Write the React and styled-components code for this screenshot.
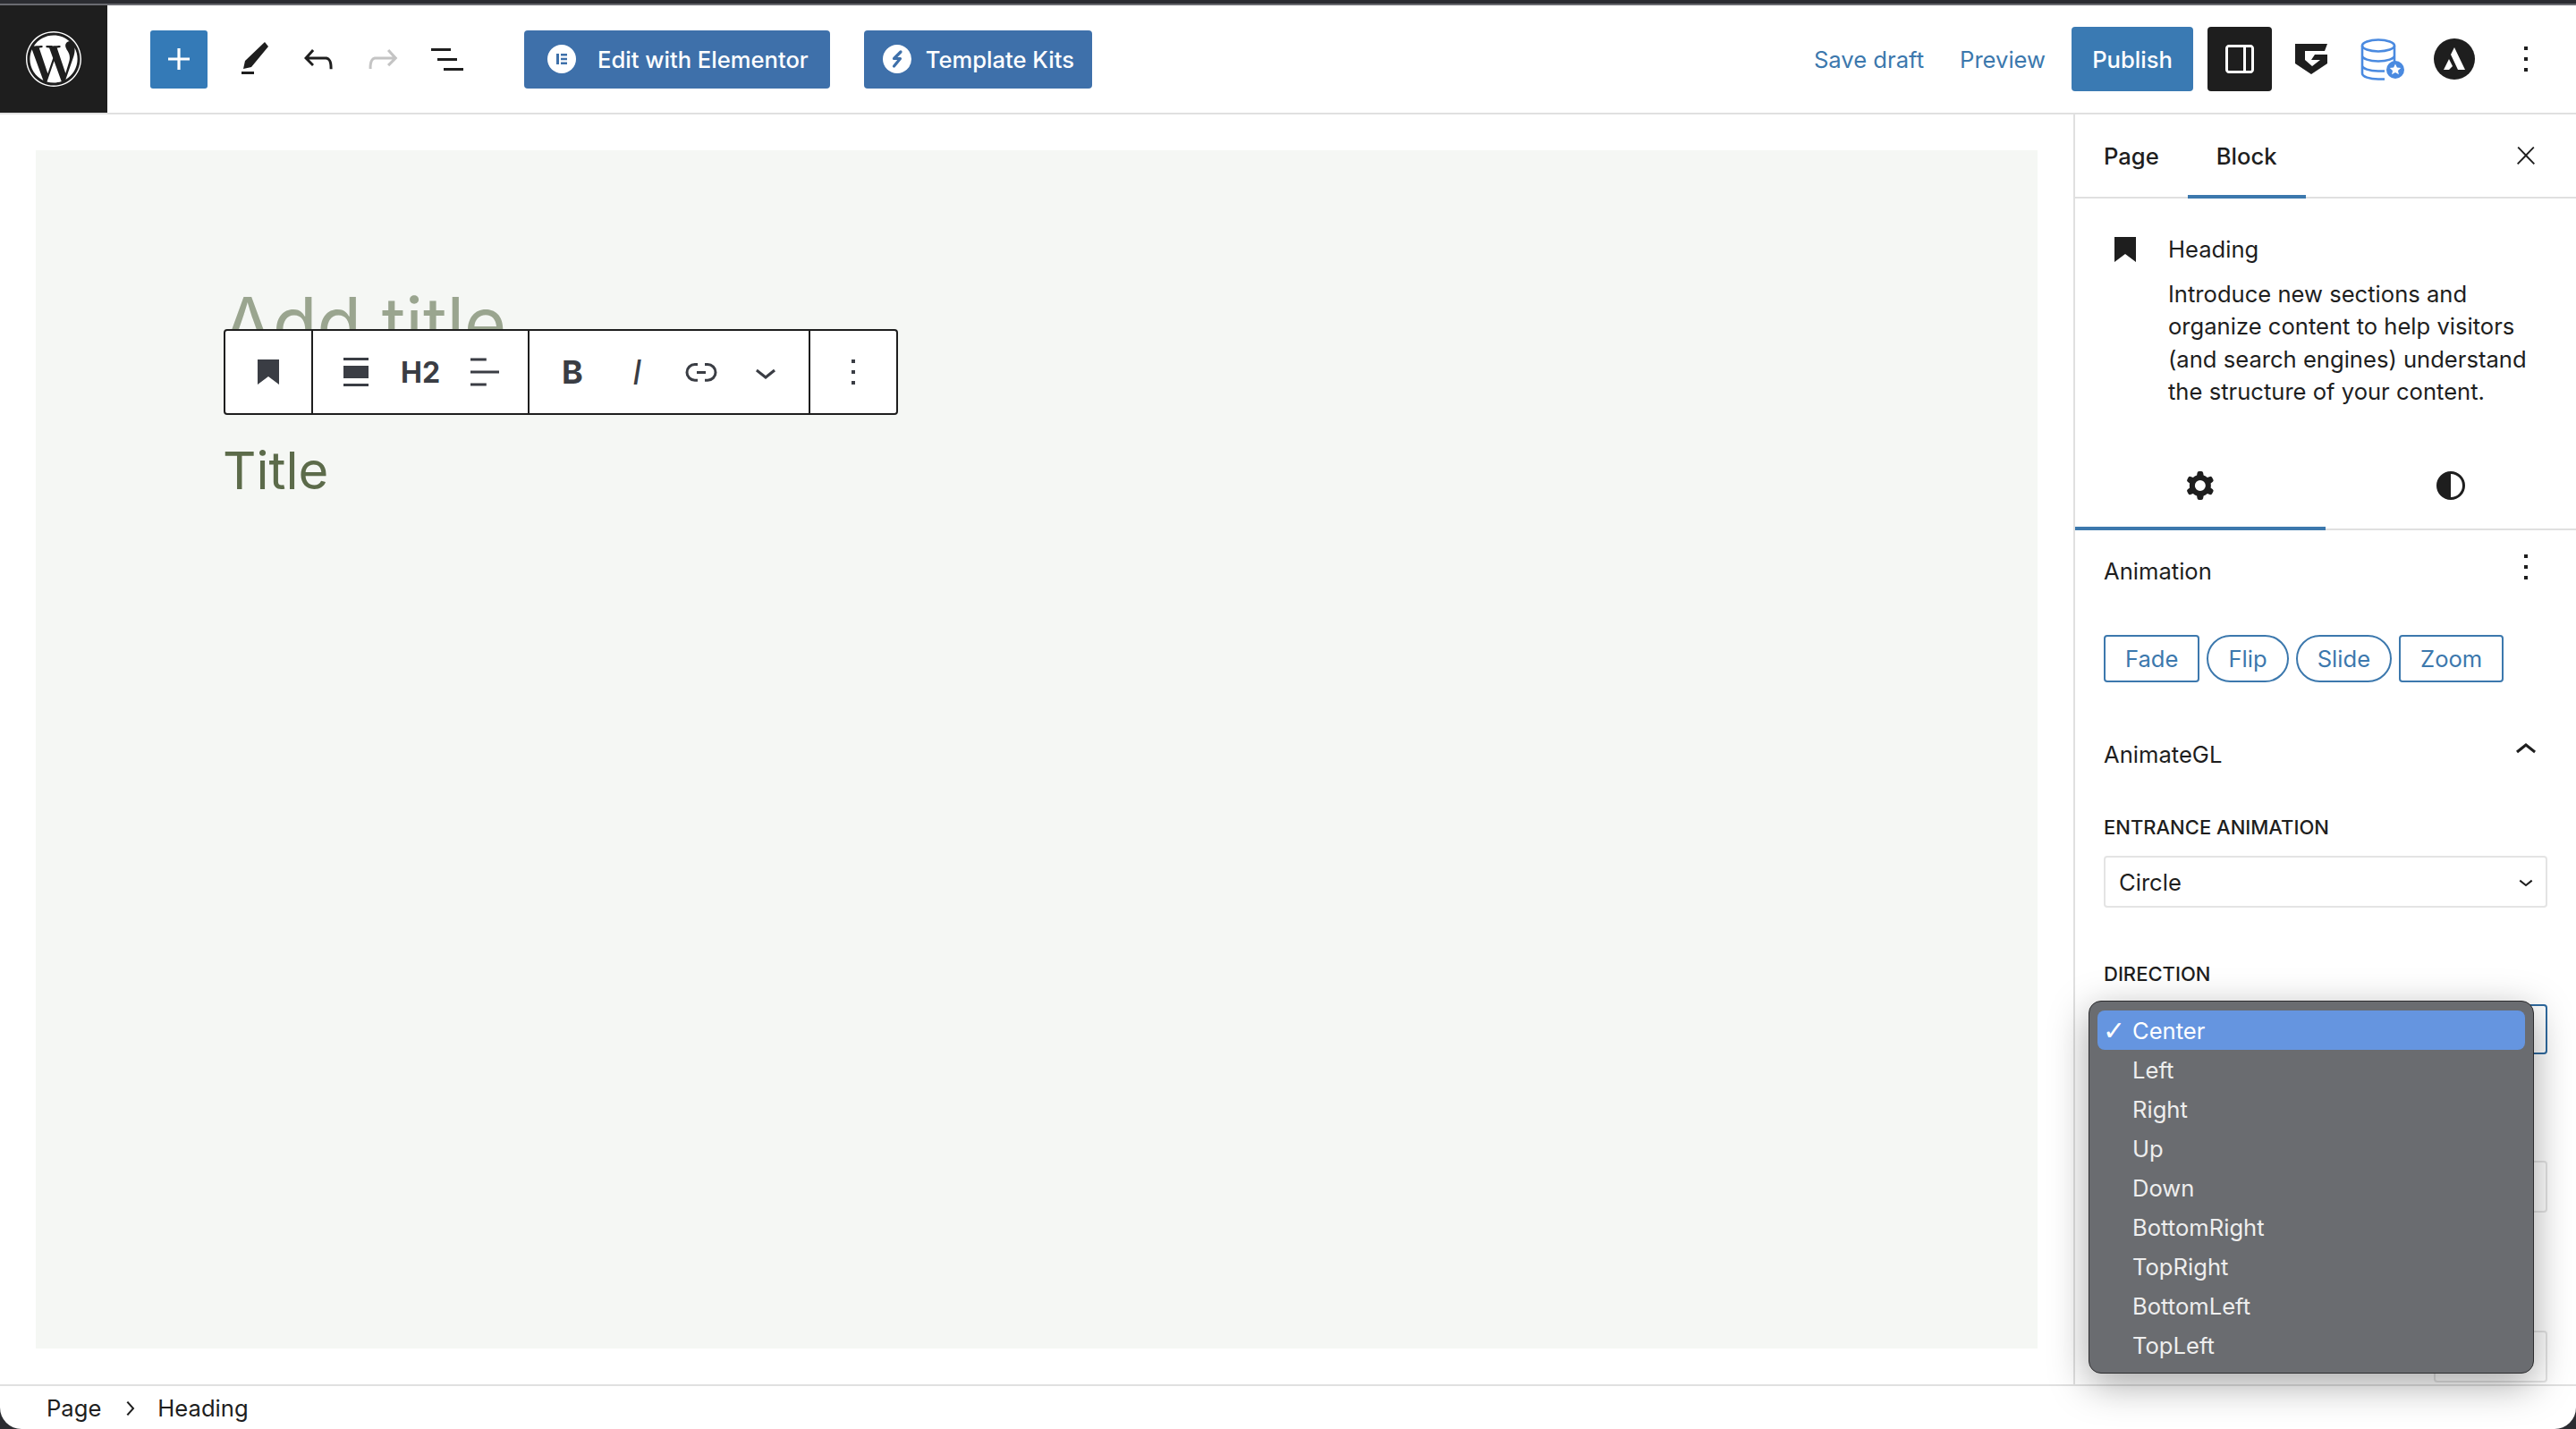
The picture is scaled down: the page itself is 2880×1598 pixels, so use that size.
import React from 'react'
import styled, { createGlobalStyle } from 'styled-components'
import { FaWordpress } from 'react-icons/fa'

const paths = {
    plus: 'M18 11.2h-5.2V6h-1.6v5.2H6v1.6h5.2V18h1.6v-5.2H18z',
    pencil: 'M18 2.500L20 5 10.500 16.500 6 17.500 7 13ZM5 19h7v1.500H5Z',
    undo: 'M18.3 11.7c-.6-.6-1.4-.9-2.3-.9H6.7l2.9-3.3-1.1-1-4.5 5L8.5 16l1-1-2.7-2.7H16c.5 0 .9.2 1.3.5 1 1 1 3.4 1 4.5v.3h1.5v-.2c0-1.5 0-4.3-1.5-5.7z',
    redo: 'M15.6 6.5l-1.1 1 2.9 3.3H8c-.9 0-1.7.3-2.3.9-1.4 1.5-1.4 4.2-1.4 5.6v.2h1.5v-.3c0-1.1 0-3.5 1-4.5.3-.3.7-.5 1.3-.5h9.2L14.5 15l1.1 1.1 4.6-4.6-4.6-5z',
    list: 'M3 6h11v1.5H3V6Zm3.5 5.5h11V13h-11v-1.5ZM21 17H10v1.5h11V17Z',
    drawer: 'M18 4H6c-1.1 0-2 .9-2 2v12c0 1.1.9 2 2 2h12c1.1 0 2-.9 2-2V6c0-1.1-.9-2-2-2zm-4 14.5H6c-.3 0-.5-.2-.5-.5V6c0-.3.2-.5.5-.5h8v13zm4.5-.5c0 .3-.2.5-.5.5h-2.5v-13H18c.3 0 .5.2.5.5v12z',
    more: 'M13 19h-2v-2h2v2zm0-6h-2v-2h2v2zm0-6h-2V5h2v2z',
    close: 'M13 11.8l6.1-6.3-1-1-6.1 6.2-6.1-6.2-1 1 6.1 6.3-6.5 6.7 1 1 6.5-6.6 6.5 6.6 1-1z',
    bookmark: 'M6 5h12v14l-6-4.5L6 19z',
    alignWide: 'M5 4h14v1.5H5zM5 18.5h14V20H5zM5 8.5h14v7H5z',
    textLeft: 'M4 19.8h8.9v-1.5H4v1.5zm8.9-15.6H4v1.5h8.9V4.2zm-8.9 7v1.5h16v-1.5H4z',
    link: 'M10 17.389H8.444A5.194 5.194 0 1 1 8.444 7H10v1.5H8.444a3.694 3.694 0 0 0 0 7.389H10v1.5ZM14 7h1.556a5.194 5.194 0 0 1 0 10.39H14v-1.5h1.556a3.694 3.694 0 0 0 0-7.39H14V7Zm-4.5 6h5v-1.5h-5V13Z',
    chevronDown: 'M17.5 11.6L12 16l-5.5-4.4.9-1.2L12 14l4.5-3.6 1 1.2z',
    chevronUp: 'M6.5 12.4L12 8l5.5 4.4-.9 1.2L12 10l-4.5 3.6-1-1.2z',
    chevronRight: 'M10.6 6L9.4 7l4.6 5-4.6 5 1.2 1 5.4-6z',
    gear: 'M10.289 4.836A1 1 0 0111.275 4h1.306a1 1 0 01.987.836l.244 1.466c.787.26 1.503.679 2.108 1.218l1.393-.522a1 1 0 011.216.437l.653 1.13a1 1 0 01-.23 1.273l-1.148.944a6.025 6.025 0 010 2.435l1.149.946a1 1 0 01.23 1.272l-.653 1.13a1 1 0 01-1.216.437l-1.394-.522c-.605.54-1.32.958-2.108 1.218l-.244 1.466a1 1 0 01-.987.836h-1.306a1 1 0 01-.986-.836l-.244-1.466a5.995 5.995 0 01-2.108-1.218l-1.394.522a1 1 0 01-1.217-.436l-.653-1.131a1 1 0 01.23-1.272l1.149-.946a6.026 6.026 0 010-2.435l-1.148-.944a1 1 0 01-.23-1.272l.653-1.131a1 1 0 011.217-.437l1.393.522a5.994 5.994 0 012.108-1.218l.244-1.466zM14.929 12a3 3 0 11-6 0 3 3 0 016 0z',
    contrast: 'M12 4a8 8 0 1 0 0 16 8 8 0 0 0 0-16zm0 1.5a6.5 6.5 0 0 1 0 13z',
}

const Icon = ({ name, size = 48, color = 'currentColor' }) => (
    <IconSvg viewBox="0 0 24 24" $size={size} fill={color}>
        <path d={paths[name]} fillRule="evenodd" clipRule="evenodd" />
    </IconSvg>
)

const animations = [
    { label: 'Fade', pill: false },
    { label: 'Flip', pill: true },
    { label: 'Slide', pill: true },
    { label: 'Zoom', pill: false },
]

const directions = ['Center', 'Left', 'Right', 'Up', 'Down', 'BottomRight', 'TopRight', 'BottomLeft', 'TopLeft']

export default function App() {
    return (
        <Frame>
            <GlobalStyle />
            <Page>
                <Header>
                    <LogoTile>
                        <FaWordpress size={64} color="#fff" />
                    </LogoTile>
                    <AddButton><Icon name="plus" size={48} /></AddButton>
                    <ToolGroup>
                        <HeaderIcon><Icon name="pencil" /></HeaderIcon>
                        <HeaderIcon><Icon name="undo" /></HeaderIcon>
                        <HeaderIcon $muted><Icon name="redo" /></HeaderIcon>
                        <HeaderIcon><Icon name="list" /></HeaderIcon>
                    </ToolGroup>
                    <PluginButton $left={50} $gap={24} $pad="0 24px 0 26px">
                        <svg width="32" height="32" viewBox="0 0 32 32">
                            <circle cx="16" cy="16" r="16" fill="#fff" />
                            <path d="M10 10h3v12h-3zM15 10h7v2.5h-7zM15 14.7h7v2.6h-7zM15 19.5h7V22h-7z" fill="#3e70aa" />
                        </svg>
                        Edit with Elementor
                    </PluginButton>
                    <PluginButton $left={38} $gap={16} $pad="0 20px 0 21px">
                        <svg width="32" height="32" viewBox="0 0 32 32">
                            <circle cx="16" cy="16" r="16" fill="#fff" />
                            <path d="M20 8l-7.500 7.500h7L12.500 24" fill="none" stroke="#3e70aa" strokeWidth="3.200" strokeLinejoin="round" strokeLinecap="round" />
                        </svg>
                        Template Kits
                    </PluginButton>
                    <HeaderRight>
                        <TextLink>Save draft</TextLink>
                        <TextLink $left={40}>Preview</TextLink>
                        <PublishButton>Publish</PublishButton>
                        <DrawerButton><Icon name="drawer" /></DrawerButton>
                        <PluginIcon>
                            <svg width="36" height="34" viewBox="0 0 36 34">
                                <path d="M0 0H36L33 8H11V18L19 25L28 18H18L22 12H36V22L18 34L0 22Z" fill="#1e1e1e" />
                            </svg>
                        </PluginIcon>
                        <PluginIcon>
                            <svg width="50" height="47" viewBox="0 0 50 47" fill="none">
                                <ellipse cx="20" cy="8" rx="18" ry="6.5" stroke="#4a8ae0" strokeWidth="2.6" />
                                <path d="M2 8v31c0 3.600 8 6.500 18 6.500h7M38 8v20M2 19c0 3.600 8 6.500 18 6.500s18-2.900 18-6.500M2 30c0 3.600 8 6.500 18 6.500h7" stroke="#4a8ae0" strokeWidth="2.600" />
                                <circle cx="39" cy="35" r="10" fill="#4a8ae0" />
                                <path d="M39 28.500l1.900 4 4.300.5-3.200 3 .9 4.300-3.900-2.200-3.900 2.200.9-4.300-3.200-3 4.300-.5z" fill="#fff" />
                            </svg>
                        </PluginIcon>
                        <PluginIcon>
                            <svg width="46" height="46" viewBox="0 0 46 46">
                                <circle cx="23" cy="23" r="23" fill="#1e1e1e" />
                                <path d="M23 10L35 35H27L19 18ZM17 23L21 31L17 35H11Z" fill="#fff" />
                            </svg>
                        </PluginIcon>
                        <PluginIcon><Icon name="more" /></PluginIcon>
                    </HeaderRight>
                </Header>
                <Body>
                    <Main>
                        <Canvas>
                            <AddTitle>Add title</AddTitle>
                            <BlockTitle>Title</BlockTitle>
                            <BlockToolbar>
                                <ToolbarSection>
                                    <ToolbarItem><Icon name="bookmark" /></ToolbarItem>
                                </ToolbarSection>
                                <ToolbarSection>
                                    <ToolbarItem><Icon name="alignWide" /></ToolbarItem>
                                    <ToolbarItem $size={32} $weight={700}>H2</ToolbarItem>
                                    <ToolbarItem><Icon name="textLeft" /></ToolbarItem>
                                </ToolbarSection>
                                <ToolbarSection>
                                    <ToolbarItem $size={36} $weight={700}>B</ToolbarItem>
                                    <ToolbarItem $size={38} $italic>I</ToolbarItem>
                                    <ToolbarItem><Icon name="link" /></ToolbarItem>
                                    <ToolbarItem><Icon name="chevronDown" /></ToolbarItem>
                                </ToolbarSection>
                                <ToolbarSection $last>
                                    <ToolbarItem><Icon name="more" /></ToolbarItem>
                                </ToolbarSection>
                            </BlockToolbar>
                        </Canvas>
                    </Main>
                    <Sidebar>
                        <SidebarTabs>
                            <SidebarTab>Page</SidebarTab>
                            <SidebarTab $active>Block</SidebarTab>
                            <CloseSlot><Icon name="close" size={32} /></CloseSlot>
                        </SidebarTabs>
                        <BlockCard>
                            <CardIcon><Icon name="bookmark" color="#1e1e1e" /></CardIcon>
                            <div>
                                <CardTitle>Heading</CardTitle>
                                <CardText>
                                    Introduce new sections and<br />
                                    organize content to help visitors<br />
                                    (and search engines) understand<br />
                                    the structure of your content.
                                </CardText>
                            </div>
                        </BlockCard>
                        <InspectorTabs>
                            <InspectorTab $active><Icon name="gear" /></InspectorTab>
                            <InspectorTab><Icon name="contrast" /></InspectorTab>
                        </InspectorTabs>
                        <PanelHead>
                            <PanelTitle>Animation</PanelTitle>
                            <PanelAction><Icon name="more" /></PanelAction>
                        </PanelHead>
                        <AnimationRow>
                            {animations.map(item => (
                                <AnimationButton key={item.label} $pill={item.pill}>{item.label}</AnimationButton>
                            ))}
                        </AnimationRow>
                        <PanelHead $top={62}>
                            <PanelTitle>AnimateGL</PanelTitle>
                            <PanelAction><Icon name="chevronUp" /></PanelAction>
                        </PanelHead>
                        <Fields>
                            <FieldLabel $top={49}>Entrance animation</FieldLabel>
                            <SelectBox $top={17}>
                                Circle
                                <Icon name="chevronDown" size={32} color="#1e1e1e" />
                            </SelectBox>
                            <FieldLabel $top={59}>Direction</FieldLabel>
                            <DirectionWrap>
                                <SelectBox $focused />
                                <SelectMenu>
                                    {directions.map((dir, i) => (
                                        <MenuRow key={dir} $selected={i === 0}>
                                            <MenuCheck>{i === 0 ? '✓' : ''}</MenuCheck>
                                            {dir}
                                        </MenuRow>
                                    ))}
                                </SelectMenu>
                            </DirectionWrap>
                            <SelectBox $top={119} />
                            <SelectBox $top={132} $narrow />
                        </Fields>
                    </Sidebar>
                </Body>
                <Footer>
                    <Crumb>Page</Crumb>
                    <CrumbSep><Icon name="chevronRight" size={32} /></CrumbSep>
                    <Crumb>Heading</Crumb>
                </Footer>
            </Page>
        </Frame>
    )
}

const GlobalStyle = createGlobalStyle`
    * {
        box-sizing: border-box;
    }
    body {
        margin: 0;
        font-family: Inter, "Liberation Sans", sans-serif;
        color: #1e1e1e;
        -webkit-font-smoothing: antialiased;
    }
`

const IconSvg = styled.svg`
    display: block;
    flex: none;
    width: ${props => props.$size}px;
    height: ${props => props.$size}px;
`

const Frame = styled.div`
    height: 100vh;
    padding-top: 4px;
    background: #2b2c31;
    overflow: hidden;
`

const Page = styled.div`
    height: 100%;
    display: flex;
    flex-direction: column;
    border-top: 2px solid #6a6b70;
    border-radius: 0 0 24px 24px;
    background: #fff;
`

const Header = styled.header`
    height: 122px;
    flex: none;
    display: flex;
    align-items: center;
    border-bottom: 2px solid #e0e0e0;
    padding-right: 16px;
`

const LogoTile = styled.div`
    width: 120px;
    height: 120px;
    background: #1e1e1e;
    display: flex;
    align-items: center;
    justify-content: center;
`

const AddButton = styled.div`
    width: 64px;
    height: 65px;
    margin-left: 48px;
    border-radius: 3px;
    background: #347ab7;
    color: #fff;
    display: flex;
    align-items: center;
    justify-content: center;
`

const ToolGroup = styled.div`
    display: flex;
    margin-left: 16px;
`

const HeaderIcon = styled.div`
    width: 72px;
    height: 72px;
    display: flex;
    align-items: center;
    justify-content: center;
    color: ${props => (props.$muted ? '#c4c4c4' : '#1e1e1e')};
`

const PluginButton = styled.div`
    height: 65px;
    margin-left: ${props => props.$left}px;
    padding: ${props => props.$pad};
    display: flex;
    align-items: center;
    gap: ${props => props.$gap}px;
    border-radius: 4px;
    background: #3e70aa;
    color: #fff;
    font-size: 25.6px;
    font-weight: 500;
    white-space: nowrap;
`

const HeaderRight = styled.div`
    margin-left: auto;
    display: flex;
    align-items: center;
`

const TextLink = styled.span`
    margin-left: ${props => props.$left || 0}px;
    color: #3c78ad;
    font-size: 25.6px;
`

const PublishButton = styled.div`
    width: 136px;
    height: 72px;
    margin-left: 29px;
    border-radius: 4px;
    background: #3a7ab3;
    color: #fff;
    font-size: 25.6px;
    font-weight: 500;
    display: flex;
    align-items: center;
    justify-content: center;
`

const DrawerButton = styled.div`
    width: 72px;
    height: 72px;
    margin-left: 16px;
    margin-right: 4px;
    border-radius: 4px;
    background: #1e1e1e;
    color: #fff;
    display: flex;
    align-items: center;
    justify-content: center;
`

const PluginIcon = styled.div`
    width: 80px;
    height: 72px;
    display: flex;
    align-items: center;
    justify-content: center;
`

const Body = styled.div`
    flex: 1;
    min-height: 0;
    display: flex;
`

const Main = styled.main`
    flex: 1;
    padding: 40px;
    display: flex;
`

const Canvas = styled.div`
    position: relative;
    flex: 1;
    padding: 146px 0 0 209px;
    background: #f5f7f4;
    overflow: hidden;
`

const AddTitle = styled.div`
    height: 96px;
    font-size: 81px;
    line-height: 96px;
    color: #9aa58f;
`

const BlockTitle = styled.div`
    margin-top: 82px;
    font-size: 58px;
    line-height: 68px;
    color: #5c6b4a;
`

const BlockToolbar = styled.div`
    position: absolute;
    top: 200px;
    left: 210px;
    display: flex;
    height: 96px;
    border: 2px solid #1e1e1e;
    border-radius: 4px;
    background: #fff;
    color: #3a3d44;
`

const ToolbarSection = styled.div`
    display: flex;
    align-items: center;
    padding: 0 12px;
    border-right: ${props => (props.$last ? 'none' : '2px solid #1e1e1e')};
`

const ToolbarItem = styled.div`
    width: 72px;
    display: flex;
    align-items: center;
    justify-content: center;
    font-size: ${props => props.$size || 26}px;
    font-weight: ${props => props.$weight || 400};
    font-style: ${props => (props.$italic ? 'italic' : 'normal')};
`

const Sidebar = styled.aside`
    width: 562px;
    flex: none;
    border-left: 2px solid #e0e0e0;
    display: flex;
    flex-direction: column;
    font-size: 25.6px;
`

const SidebarTabs = styled.div`
    height: 94px;
    flex: none;
    display: flex;
    border-bottom: 2px solid #e0e0e0;
`

const SidebarTab = styled.div`
    height: 94px;
    padding: 2px 32px 0;
    display: flex;
    align-items: center;
    font-weight: 500;
    border-bottom: 4px solid ${props => (props.$active ? '#3c78ad' : 'transparent')};
`

const CloseSlot = styled.div`
    margin-left: auto;
    padding-right: 40px;
    display: flex;
    align-items: center;
`

const BlockCard = styled.div`
    display: flex;
    gap: 24px;
    padding: 39px 32px 38px;
`

const CardIcon = styled.div`
    margin-top: -6px;
`

const CardTitle = styled.div`
    font-weight: 400;
    line-height: 36px;
`

const CardText = styled.div`
    margin-top: 14px;
    line-height: 36.4px;
    white-space: nowrap;
`

const InspectorTabs = styled.div`
    height: 98px;
    flex: none;
    display: flex;
    border-bottom: 2px solid #e0e0e0;
`

const InspectorTab = styled.div`
    width: 280px;
    height: 98px;
    padding-top: 2px;
    display: flex;
    align-items: center;
    justify-content: center;
    border-bottom: 4px solid ${props => (props.$active ? '#3c78ad' : 'transparent')};
`

const PanelHead = styled.div`
    display: flex;
    align-items: flex-start;
    justify-content: space-between;
    padding: 0 32px;
    margin-top: ${props => props.$top || 27}px;
    height: 36px;
`

const PanelTitle = styled.div`
    font-weight: 400;
    line-height: 38px;
`

const PanelAction = styled.div`
    margin-top: -10px;
`

const AnimationRow = styled.div`
    display: flex;
    gap: 8px;
    padding: 0 32px;
    margin-top: 54px;
`

const AnimationButton = styled.div`
    height: 53px;
    padding: 0 22px;
    display: flex;
    align-items: center;
    border: 2px solid #3c78ad;
    border-radius: ${props => (props.$pill ? '27px' : '4px')};
    color: #3c78ad;
`

const Fields = styled.div`
    display: flex;
    flex-direction: column;
    padding: 0 32px;
`

const FieldLabel = styled.div`
    margin-top: ${props => props.$top}px;
    font-size: 22px;
    line-height: 30px;
    font-weight: 500;
    text-transform: uppercase;
`

const SelectBox = styled.div`
    height: ${props => (props.$focused ? '56px' : '58px')};
    margin-top: ${props => props.$top || 0}px;
    padding: 1px 6px 0 15px;
    display: flex;
    align-items: center;
    justify-content: space-between;
    border: 2px solid ${props => (props.$focused ? '#2f6a9f' : '#e4e4e4')};
    border-radius: 4px;
    background: #fff;
    ${props => props.$narrow && 'width: 127px; align-self: flex-end;'}
`

const DirectionWrap = styled.div`
    position: relative;
    margin-top: 19px;
`

const SelectMenu = styled.div`
    position: absolute;
    top: -4px;
    left: -17px;
    z-index: 5;
    width: 498px;
    height: 417px;
    padding: 10px 9px;
    border: 1px solid #2c2c2e;
    border-radius: 14px;
    background: #6a6c70;
    box-shadow: 0 12px 44px rgba(0, 0, 0, 0.35);
`

const MenuRow = styled.div`
    height: 44px;
    padding-top: 1px;
    display: flex;
    align-items: center;
    border-radius: 8px;
    color: ${props => (props.$selected ? '#fff' : '#eeeeee')};
    background: ${props => (props.$selected ? '#6595e0' : 'transparent')};
`

const MenuCheck = styled.span`
    width: 39px;
    flex: none;
    padding-left: 6px;
    font-family: "DejaVu Sans", sans-serif;
    font-size: 30px;
`

const Footer = styled.footer`
    height: 50px;
    flex: none;
    display: flex;
    align-items: center;
    padding: 1px 0 0 52px;
    border-top: 2px solid #e0e0e0;
    font-size: 25.6px;
`

const Crumb = styled.span`
    line-height: 46px;
`

const CrumbSep = styled.span`
    margin: 0 15px 0 16px;
`
